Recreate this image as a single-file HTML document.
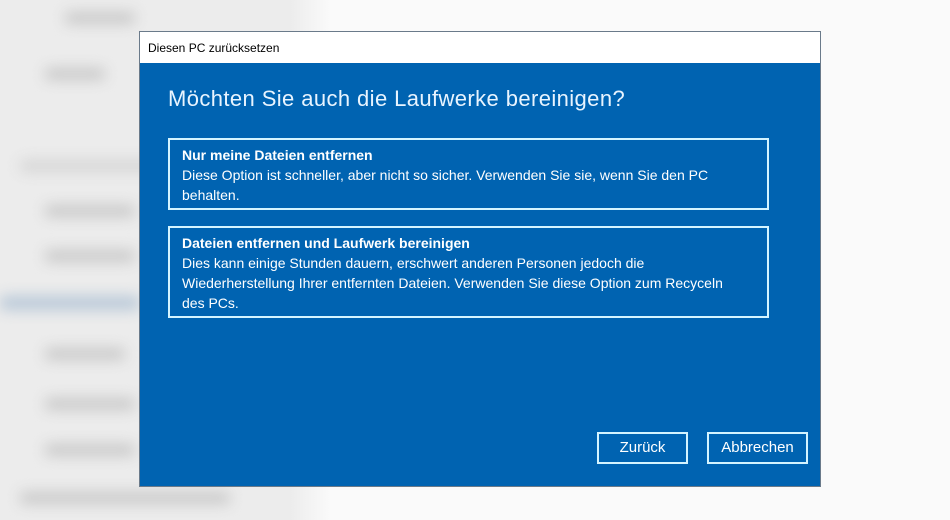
<!DOCTYPE html>
<html><head><meta charset="utf-8"><style>
*{margin:0;padding:0;box-sizing:border-box}
body{width:950px;height:520px;overflow:hidden;background:#fafafa;font-family:"Liberation Sans",sans-serif;position:relative}
.side{position:absolute;left:0;top:0;width:330px;height:520px;background:linear-gradient(90deg,#ececec 0,#ececec 290px,#fafafa 330px)}
.blob{position:absolute;background:#c8c8c8;filter:blur(7px);height:12px;border-radius:4px}
.dlg{position:absolute;left:139px;top:31px;width:682px;height:456px;background:#0063b1;border:1px solid #6a7a8a}
.tb{height:31px;background:#fff;font-size:12px;color:#000;padding:9px 0 0 8px}
h1{position:absolute;left:28px;top:54px;font-weight:normal;font-size:22px;color:#e8f4ff;letter-spacing:0.4px}
.box{position:absolute;left:28px;width:601px;border:2px solid #d4f4ff;color:#fff;font-size:14px;line-height:20px;padding:5px 22px 0 12px}
.box b{display:block}
.btn{position:absolute;top:400px;height:32px;border:2px solid #d4f4ff;color:#fff;font-size:15px;text-align:center;line-height:28px}
</style></head><body>
<div class="side">
<div class="blob" style="left:65px;top:12px;width:70px"></div>
<div class="blob" style="left:45px;top:68px;width:60px"></div>
<div class="blob" style="left:20px;top:160px;width:230px;background:#d5d5d5"></div>
<div class="blob" style="left:45px;top:205px;width:90px"></div>
<div class="blob" style="left:45px;top:250px;width:90px"></div>
<div class="blob" style="left:0;top:296px;width:140px;height:14px;background:#b8c8d8"></div>
<div class="blob" style="left:45px;top:348px;width:80px"></div>
<div class="blob" style="left:45px;top:398px;width:90px"></div>
<div class="blob" style="left:45px;top:444px;width:90px"></div>
<div class="blob" style="left:20px;top:492px;width:210px"></div>
</div>
<div class="dlg">
<div class="tb">Diesen PC zurücksetzen</div>
<h1>Möchten Sie auch die Laufwerke bereinigen?</h1>
<div class="box" style="top:106px;height:72px"><b>Nur meine Dateien entfernen</b>Diese Option ist schneller, aber nicht so sicher. Verwenden Sie sie, wenn Sie den PC behalten.</div>
<div class="box" style="top:194px;height:92px"><b>Dateien entfernen und Laufwerk bereinigen</b>Dies kann einige Stunden dauern, erschwert anderen Personen jedoch die Wiederherstellung Ihrer entfernten Dateien. Verwenden Sie diese Option zum Recyceln des PCs.</div>
<div class="btn" style="left:457px;width:91px">Zurück</div>
<div class="btn" style="left:567px;width:101px">Abbrechen</div>
</div>
</body></html>
